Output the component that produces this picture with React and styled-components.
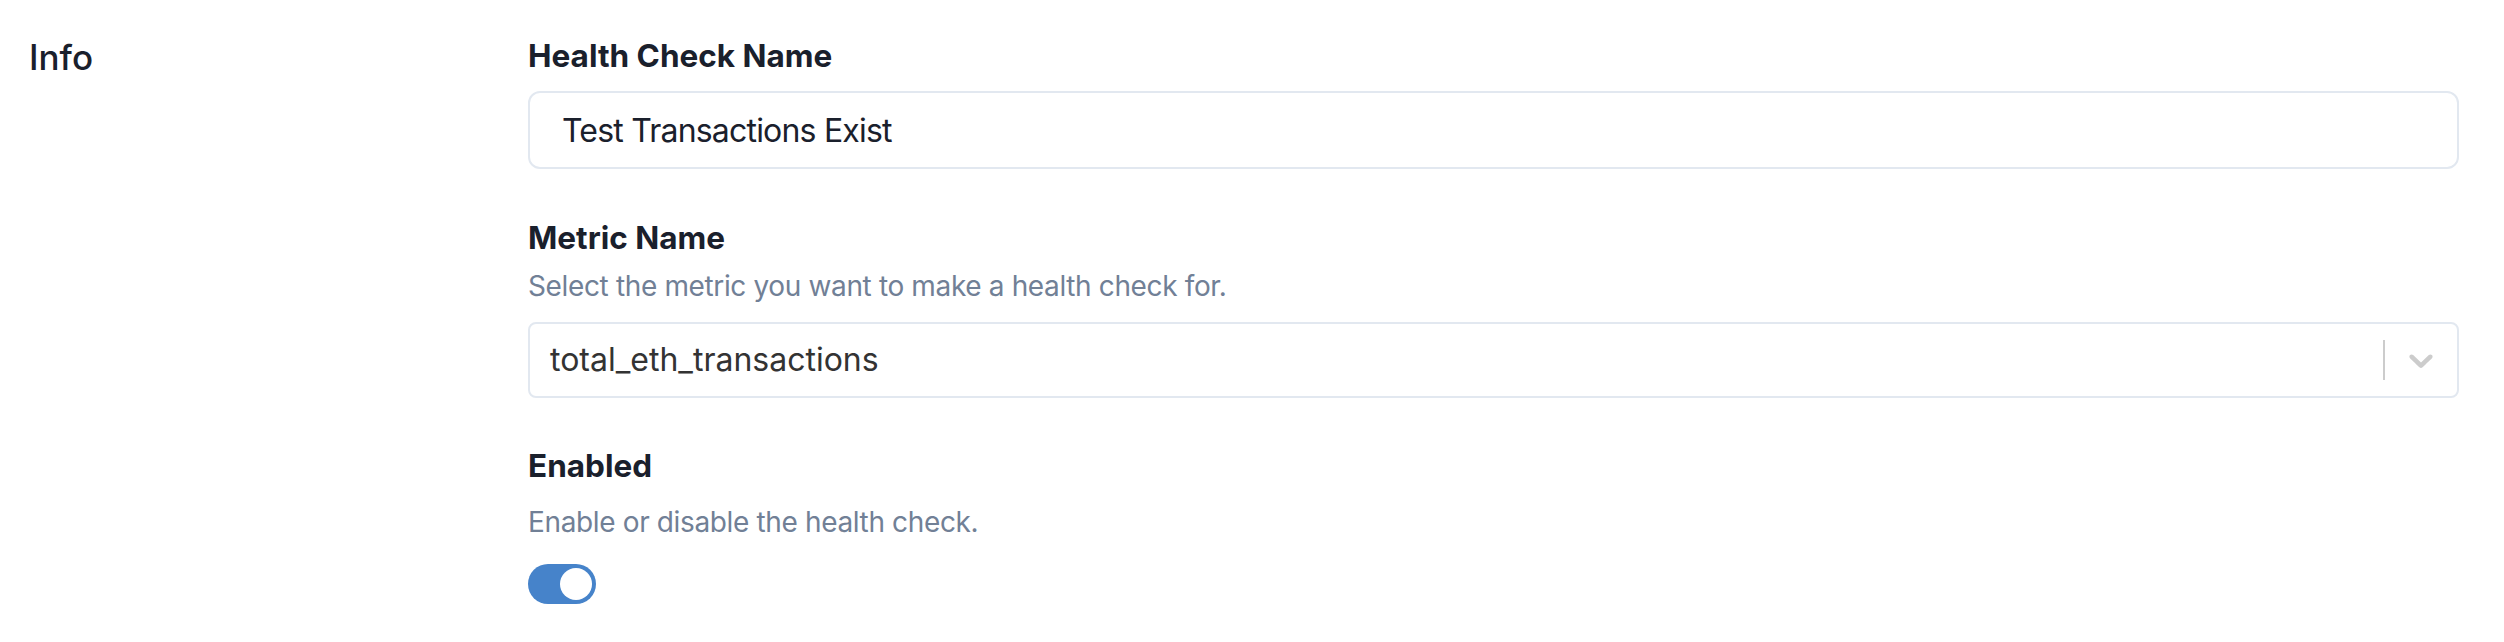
import React, { useState } from 'react'
import styled, { createGlobalStyle } from 'styled-components'

const GlobalStyle = createGlobalStyle`
  html, body {
    margin: 0;
    padding: 0;
    background: #ffffff;
  }
  body {
    font-family: Inter, "Noto Sans", "Liberation Sans", sans-serif;
    color: #1a202c;
  }
`

function ChevronDown() {
  return (
    <svg width="40" height="40" viewBox="0 0 20 20" aria-hidden="true">
      <path
        fill="#cccccc"
        d="M4.516 7.548c0.436-0.446 1.043-0.481 1.576 0l3.908 3.747 3.908-3.747c0.533-0.481 1.141-0.446 1.574 0 0.436 0.445 0.408 1.197 0 1.615-0.406 0.418-4.695 4.502-4.695 4.502-0.217 0.223-0.502 0.335-0.787 0.335s-0.57-0.112-0.789-0.335c0 0-4.287-4.084-4.695-4.502s-0.436-1.170 0-1.615z"
      />
    </svg>
  )
}

function App() {
  const [name, setName] = useState('Test Transactions Exist')
  const [enabled, setEnabled] = useState(true)

  return (
    <>
      <GlobalStyle />
      <Section>
        <SectionTitle>Info</SectionTitle>
        <Form>
          <Field $gap={48}>
            <Label $mb={14}>Health Check Name</Label>
            <TextInput value={name} onChange={(e) => setName(e.target.value)} />
          </Field>

          <Field $gap={47}>
            <Label $mb={6}>Metric Name</Label>
            <Hint $mb={15}>Select the metric you want to make a health check for.</Hint>
            <SelectControl>
              <ValueBox>total_eth_transactions</ValueBox>
              <Indicators>
                <Separator />
                <DropdownButton>
                  <ChevronDown />
                </DropdownButton>
              </Indicators>
            </SelectControl>
          </Field>

          <Field $gap={0}>
            <Label $mb={14}>Enabled</Label>
            <Hint $mb={21}>Enable or disable the health check.</Hint>
            <SwitchTrack $on={enabled} onClick={() => setEnabled(!enabled)}>
              <SwitchKnob />
            </SwitchTrack>
          </Field>
        </Form>
      </Section>
    </>
  )
}

export default App

const Section = styled.div`
  display: flex;
  align-items: flex-start;
  padding: 33px 45px 40px 29px;
`

const SectionTitle = styled.h2`
  width: 499px;
  flex-shrink: 0;
  margin: 0;
  font-size: 35px;
  line-height: 48px;
  font-weight: 500;
  color: #1a202c;
`

const Form = styled.div`
  flex: 1;
  display: flex;
  flex-direction: column;
  padding-top: 2px;
`

const Field = styled.div`
  display: flex;
  flex-direction: column;
  margin-bottom: ${(p) => p.$gap}px;
`

const Label = styled.label`
  font-size: 31.5px;
  line-height: 42px;
  font-weight: 700;
  color: #1a202c;
  margin-bottom: ${(p) => p.$mb}px;
`

const Hint = styled.p`
  margin: 0 0 ${(p) => p.$mb}px;
  font-size: 28px;
  line-height: 42px;
  letter-spacing: -0.36px;
  color: #718096;
`

const TextInput = styled.input`
  box-sizing: border-box;
  height: 78px;
  width: 100%;
  padding: 0 32px;
  border: 2px solid #e2e8f0;
  border-radius: 12px;
  background: #fff;
  font-family: inherit;
  font-size: 32px;
  letter-spacing: -0.8px;
  color: #1a202c;
  outline: none;
`

const SelectControl = styled.div`
  box-sizing: border-box;
  display: flex;
  align-items: center;
  height: 76px;
  border: 2px solid #e2e8f0;
  border-radius: 8px;
  background: #fff;
`

const ValueBox = styled.div`
  flex: 1;
  padding: 4px 16px 4px 20px;
  font-size: 32px;
  line-height: 40px;
  color: #333333;
`

const Indicators = styled.div`
  display: flex;
  align-self: stretch;
  align-items: center;
`

const Separator = styled.span`
  align-self: stretch;
  width: 2px;
  margin: 16px 0;
  background: #cccccc;
`

const DropdownButton = styled.div`
  display: flex;
  padding: 16px;
`

const SwitchTrack = styled.button`
  box-sizing: border-box;
  display: flex;
  justify-content: ${(p) => (p.$on ? 'flex-end' : 'flex-start')};
  align-items: center;
  width: 68px;
  height: 40px;
  padding: 4px;
  border: none;
  border-radius: 20px;
  background: ${(p) => (p.$on ? '#4683ca' : '#cbd5e0')};
  cursor: pointer;
`

const SwitchKnob = styled.span`
  width: 32px;
  height: 32px;
  border-radius: 50%;
  background: #ffffff;
`
